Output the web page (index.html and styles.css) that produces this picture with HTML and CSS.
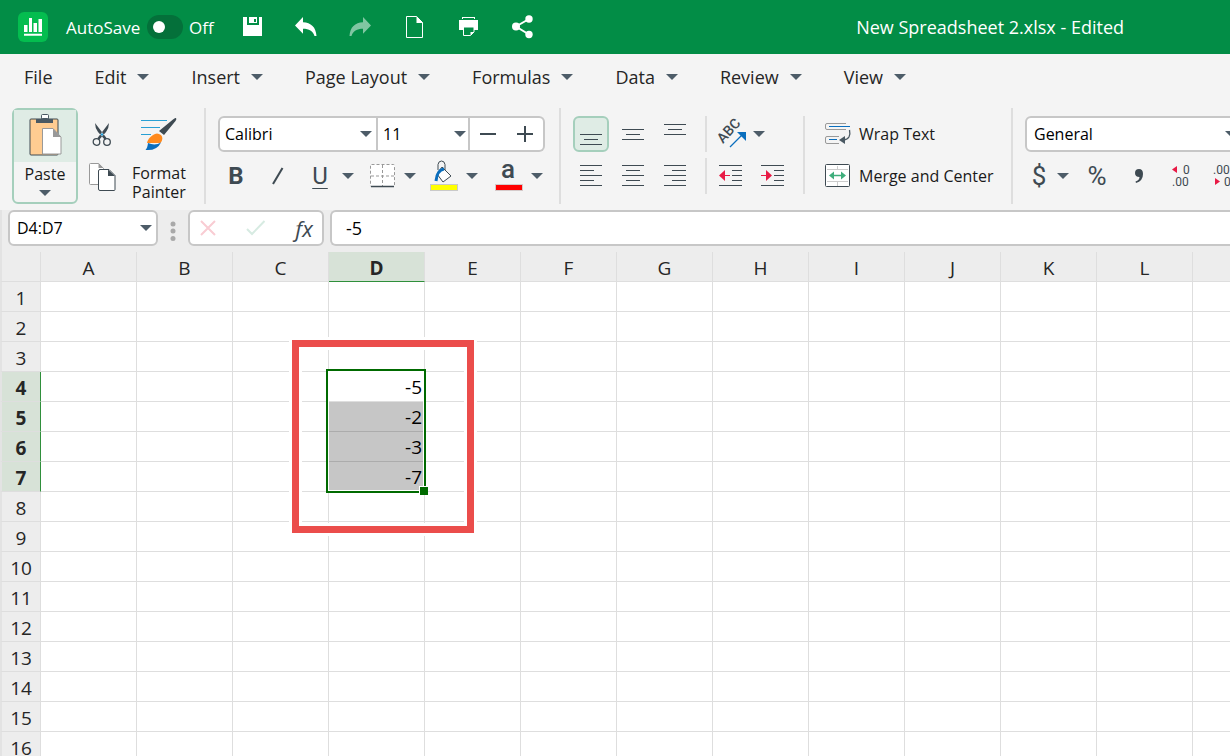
FILE: index.html
```html
<!DOCTYPE html>
<html lang="en">
<head>
<meta charset="utf-8">
<title>New Spreadsheet 2.xlsx</title>
<link rel="stylesheet" href="styles.css">
</head>
<body>
<header class="titlebar">
  <svg class="logo" viewBox="0 0 30 30"><rect width="30" height="30" rx="6" fill="#04bd4f"/><path d="M6 13h3.500v7H6zM11 6h3v14h-3zM15.500 11H19v9h-3.500zM20.500 7H24v13h-3.500zM6 21.800h18v2H6z" fill="#fff"/></svg>
  <label class="autosave"><span class="autosave-name">AutoSave</span><input type="checkbox" class="toggle"><span>Off</span></label>
  <nav class="quick">
    <button class="tool" aria-label="Save"><svg width="19" height="20"><path d="M0 0h4v8h12V0h3v19H0z" fill="#fff"/><path d="M6 0h8v6H6z" fill="#fff"/><path d="M11 2h2v3h-2z" fill="#028d46"/></svg></button>
    <button class="tool" aria-label="Undo"><svg width="22" height="20"><path d="M8 0v5.200C16 5.500 21 10 21.500 19h-2C18 14 14 11.700 8 11.700v5L0 8.500z" fill="#fff"/></svg></button>
    <button class="tool" aria-label="Redo"><svg width="22" height="20"><path d="M14 0v5.200C6 5.500 1 10 .5 19h2C4 14 8 11.700 14 11.700v5l8-8.200z" fill="#80c6a2"/></svg></button>
    <button class="tool" aria-label="New"><svg width="17" height="22"><path d="M.5.5h10l6 6v15H.5z" fill="none" stroke="#fff"/><path d="M10.500 0v7H17z" fill="#fff"/></svg></button>
    <button class="tool" aria-label="Print"><svg width="19" height="20"><path d="M3 0h13v2H3zM0 3h19v10h-4v-2.500H4.500V13H0z" fill="#fff"/><path d="M4 1h11v1H4z" fill="#028d46"/><path d="M4.500 10v8.500h7l3.500-3.500v-5z" fill="#028d46" stroke="#fff"/><path d="M11.500 18.500V15H15z" fill="#fff"/></svg></button>
    <button class="tool" aria-label="Share"><svg width="20" height="24"><path d="M17 4L4 11.500 17 19.500" fill="none" stroke="#fff" stroke-width="2"/><g fill="#fff"><circle cx="17" cy="4" r="3.700"/><circle cx="4" cy="11.500" r="4"/><circle cx="17" cy="19.500" r="3.700"/></g></svg></button>
  </nav>
  <h1 class="doc-title">New Spreadsheet 2.xlsx - Edited</h1>
</header>

<nav class="menubar">
  <button class="menu">File</button>
  <button class="menu">Edit<i class="caret"></i></button>
  <button class="menu">Insert<i class="caret"></i></button>
  <button class="menu">Page Layout<i class="caret"></i></button>
  <button class="menu">Formulas<i class="caret"></i></button>
  <button class="menu">Data<i class="caret"></i></button>
  <button class="menu">Review<i class="caret"></i></button>
  <button class="menu">View<i class="caret"></i></button>
</nav>

<section class="ribbon">
  <div class="group clipboard">
    <button class="paste">
      <span class="paste-icon"><svg width="34" height="44" viewBox="0 0 34 44"><rect x="2" y="6" width="28" height="36" rx="1" fill="#ffcc91" stroke="#3e4a52"/><path d="M8 10V6h5V3.500Q13 2 15 2h4q2 0 2 1.500V6h4v4z" fill="#4a5963"/><rect x="13.500" y="1.500" width="7" height="4" rx="1" fill="#fff" stroke="#4a5963"/><path d="M14.500 15.500h10.500l8 8.500v17H14.500z" fill="#fff" stroke="#999"/><path d="M25 15.500V24h8z" fill="#999"/></svg></span>
      <span class="paste-label">Paste</span><i class="caret"></i>
    </button>
    <div class="stack">
      <button class="tool" aria-label="Cut"><svg width="20" height="24" viewBox="0 0 20 24"><path d="M3 0q0 5 3 9l7 8 1.500-2z M17 0q0 5-3 9l-7 8-1.500-2z" fill="#3e4a52"/><circle cx="10" cy="11.500" r="1.200" fill="#1e9ad6"/><circle cx="4.500" cy="19" r="3.300" fill="none" stroke="#3e4a52" stroke-width="1.300"/><circle cx="15" cy="19" r="3.300" fill="none" stroke="#3e4a52" stroke-width="1.300"/></svg></button>
      <button class="tool" aria-label="Copy"><svg width="27" height="28" viewBox="0 0 27 28"><path d="M1.500.5h8l5 5v16h-13q-1 0-1-1v-19q0-1 1-1z" fill="#fff" stroke="#999"/><path d="M9.500 0v5h5z" fill="#999"/><path d="M11 6.500h9l6 6v14q0 1-1 1H11q-1.500 0-1.500-1.500V8q0-1.500 1.500-1.500z" fill="#fff" stroke="#3e4a52"/><path d="M19 6.500V13h7z" fill="#3e4a52"/></svg></button>
    </div>
    <button class="painter"><svg width="36" height="34" viewBox="0 0 36 34"><path d="M0 2.500h26M0 9.500h19M0 16.500h10" stroke="#28a0d4"/><path d="M35 0q1 1-.5 3L23 17l-5-4L32 1.500Q34-.5 35 0z" fill="#3e4a52"/><path d="M12 17q4-3 8 0 3 3.500-.5 8H6q1-5 6-8z" fill="#ff8a1e"/><path d="M7 25q7 3 13-.5-4 8.500-15.500 7.500Q6.500 30 7 25z" fill="#0a6ebd"/></svg><span>Format</span><span>Painter</span></button>
  </div>

  <div class="group font">
    <div class="row combo">
      <span class="select font-name"><select aria-label="Font"><option>Calibri</option></select><i class="caret"></i></span>
      <span class="select font-size"><select aria-label="Font size"><option>11</option></select><i class="caret"></i></span>
      <span class="steps"><button class="step" aria-label="Smaller"><svg width="16" height="16"><path d="M0 8h16" stroke="#3e4a52" stroke-width="2"/></svg></button><button class="step" aria-label="Larger"><svg width="16" height="16"><path d="M0 8h16M8 0v16" stroke="#3e4a52" stroke-width="2"/></svg></button></span>
    </div>
    <div class="row">
      <button class="tool glyph bold">B</button>
      <button class="tool" aria-label="Italic"><svg width="12" height="18"><path d="M1 17L10.500 1" stroke="#3e4a52" stroke-width="2"/></svg></button>
      <button class="tool split"><span class="glyph underline">U</span><i class="caret"></i></button>
      <button class="tool split" aria-label="Borders"><span><svg width="24" height="24"><rect x=".5" y=".5" width="24" height="22" rx="1" fill="#fff" stroke="#999" stroke-dasharray="3 2"/><path d="M12.500 1v22M1 12h24" stroke="#999" stroke-dasharray="3 2"/><path d="M1 22.500h23" stroke="#3e4a52" stroke-width="1.500"/></svg></span><i class="caret"></i></button>
      <button class="tool split wide" aria-label="Fill color"><span><svg width="28" height="32" viewBox="0 0 28 32"><path d="M8 10V4.500Q8.500 1 11.500 1T15 4.500V11" fill="none" stroke="#3e4a52"/><path d="M12 7l9 9-8 6-6-8z" fill="#fff" stroke="#3e4a52"/><path d="M14 9Q7 10 6 21" fill="none" stroke="#0a6ebd" stroke-width="3"/><rect x=".5" y="24.500" width="27" height="6" fill="#ff0" stroke="#c9c9c9"/></svg></span><i class="caret"></i></button>
      <button class="tool split" aria-label="Font color"><span><svg width="28" height="32" viewBox="0 0 28 32"><text x="13" y="18" class="svg-a">a</text><rect x=".5" y="24.500" width="27" height="6" fill="#f00" stroke="#d5caca"/></svg></span><i class="caret"></i></button>
    </div>
  </div>

  <div class="group align">
    <div class="row">
      <button class="tool active" aria-label="Bottom align"><svg width="22" height="26" viewBox="0 -8 22 26"><path d="M0 5.500h22M4 10.500h14M0 15.500h22" stroke="#3e4a52"/></svg></button>
      <button class="tool" aria-label="Middle align"><svg width="22" height="12"><path d="M0 1.500h22M4 6.500h14M0 11.500h22" stroke="#3e4a52"/></svg></button>
      <button class="tool" aria-label="Top align"><svg width="22" height="20"><path d="M0 .5h22M4 5.500h14M0 10.500h22" stroke="#3e4a52"/></svg></button>
    </div>
    <div class="row">
      <button class="tool" aria-label="Align left"><svg width="22" height="22"><path d="M0 .5h22M0 5.500h14M0 10.500h22M0 15.500h14M0 20.500h22" stroke="#3e4a52"/></svg></button>
      <button class="tool" aria-label="Align center"><svg width="22" height="22"><path d="M0 .5h22M4 5.500h14M0 10.500h22M4 15.500h14M0 20.500h22" stroke="#3e4a52"/></svg></button>
      <button class="tool" aria-label="Align right"><svg width="22" height="22"><path d="M0 .5h22M8 5.500h14M0 10.500h22M8 15.500h14M0 20.500h22" stroke="#3e4a52"/></svg></button>
    </div>
  </div>

  <div class="subgroup indent">
    <div class="row short-line">
      <button class="tool split" aria-label="Orientation"><span><svg width="32" height="32" viewBox="0 0 32 32"><text class="svg-abc" transform="translate(8 26) rotate(-48)">ABC</text><path d="M15 29L28 16" stroke="#0a6ebd" stroke-width="1.300"/><path d="M22 14h9v9z" fill="#0a6ebd"/></svg></span><i class="caret"></i></button>
    </div>
    <div class="row short-line">
      <button class="tool" aria-label="Decrease indent"><svg width="24" height="22"><path d="M0 .5h23M13 5.500h10M13 10.500h10M13 15.500h10M0 20.500h23" stroke="#3e4a52"/><path d="M5 10.500h6" stroke="#e81a45"/><path d="M6 5v11l-6-5.500z" fill="#e81a45"/></svg></button>
      <button class="tool" aria-label="Increase indent"><svg width="24" height="22"><path d="M0 .5h23M13 5.500h10M13 10.500h10M13 15.500h10M0 20.500h23" stroke="#3e4a52"/><path d="M0 10.500h6" stroke="#e81a45"/><path d="M5 5v11l6-5.500z" fill="#e81a45"/></svg></button>
    </div>
  </div>

  <div class="subgroup wrap">
    <button class="labelled"><svg width="26" height="24"><path d="M21 1.500H2Q.5 1.500.5 3v3Q.5 7.500 2 7.500h19M14 14.500H2q-1.500 0-1.500 1.500v4q0 1.500 1.500 1.500h12" fill="none" stroke="#999"/><path d="M4 4.500h21M4 17.500h8" stroke="#0a6ebd"/><path d="M24.500 8q2 9-6 10" fill="none" stroke="#4a5963" stroke-width="1.300"/><path d="M20 14v8l-6-4z" fill="#4a5963"/></svg>Wrap Text</button>
    <button class="labelled"><svg width="26" height="24"><rect x=".5" y=".5" width="24" height="22" rx="1" fill="#fff" stroke="#3e4a52"/><path d="M2 5.500h21M2 17.500h21M12.500 2v4M12.500 18v4" stroke="#ccc"/><path d="M7 11.500h11" stroke="#3fae7c" stroke-width="1.500"/><path d="M9 7.500v8l-5-4zM16 7.500v8l5-4z" fill="#3fae7c"/></svg>Merge and Center</button>
  </div>

  <div class="group number">
    <div class="row combo"><span class="select format"><select aria-label="Number format"><option>General</option></select><i class="caret"></i></span></div>
    <div class="row">
      <button class="tool split dollar"><span class="glyph light">$</span><i class="caret"></i></button>
      <button class="tool glyph light">%</button>
      <button class="tool" aria-label="Comma style"><svg width="10" height="14"><path d="M5 0q4 0 4 5 0 7-7 9l-.5-1.500q4-1.500 4-4.500Q1 8 1 4t4-4z" fill="#3e4a52"/></svg></button>
      <button class="tool" aria-label="Fewer decimals"><svg width="22" height="24"><path d="M7 2v7L2 5.500z" fill="#e81a45"/><text x="13" y="10" class="svg-dec">0</text><text x="2" y="22" class="svg-dec">.00</text></svg></button>
      <button class="tool" aria-label="More decimals"><svg width="22" height="24"><text x="1" y="10" class="svg-dec">.00</text><path d="M3 14v7l5-3.500z" fill="#e81a45"/><text x="12" y="22" class="svg-dec">0</text></svg></button>
    </div>
  </div>
</section>

<main class="workbook">
  <div class="formula-bar">
    <span class="select name-box"><select aria-label="Name box"><option>D4:D7</option></select><i class="caret"></i></span>
    <svg class="grip" width="6" height="22"><g fill="#a9a9a9"><circle cx="3" cy="4" r="2.500"/><circle cx="3" cy="11" r="2.500"/><circle cx="3" cy="18.500" r="2.500"/></g></svg>
    <div class="entry">
      <button class="tool" aria-label="Cancel"><svg width="16" height="16"><path d="M1 1l14 14M15 1L1 15" stroke="#f9ccd3" stroke-width="2"/></svg></button>
      <button class="tool" aria-label="Enter"><svg width="20" height="16"><path d="M1 9l5 5L18.500 1" fill="none" stroke="#d7ebe2" stroke-width="2"/></svg></button>
      <button class="tool fx">fx</button>
    </div>
    <input class="formula" aria-label="Formula" value="-5">
  </div>
  <div class="sheet">
    <table class="grid">
      <thead><tr><th class="corner"></th><th>A</th><th>B</th><th>C</th><th class="on">D</th><th>E</th><th>F</th><th>G</th><th>H</th><th>I</th><th>J</th><th>K</th><th>L</th><th class="rest"></th></tr></thead>
      <tbody id="rows"></tbody>
    </table>
    <div class="selection"></div>
    <div class="highlight"></div>
  </div>
</main>
<script src="sheet.js"></script>
</body>
</html>
```
FILE: styles.css
```css
* { box-sizing: border-box; }
body {
  margin: 0;
  height: 100vh;
  display: flex;
  flex-direction: column;
  overflow: hidden;
  background: #f4f4f4;
  color: #262626;
  font-family: "Open Sans", "Noto Sans", sans-serif;
  font-size: 18px;
  white-space: nowrap;
}
button, select, input { font: inherit; color: inherit; margin: 0; padding: 0; border: 0; background: none; }
svg { display: block; flex: none; overflow: visible; }

.caret {
  flex: none;
  width: 12px;
  border: 6px solid transparent;
  border-top-color: #4d5c68;
  border-bottom: 0;
}

.titlebar { display: flex; align-items: center; height: 54px; flex: none; padding-left: 18px; background: #028d46; color: #fff; }
.logo { width: 30px; height: 30px; margin-right: 18px; }
.autosave { display: flex; align-items: center; gap: 6px; width: 168px; font-size: 17px; }
.autosave-name { width: 75px; }
.toggle { appearance: none; display: flex; align-items: center; width: 36px; height: 24px; padding-left: 6px; border-radius: 12px; background: #04703a; }
.toggle::before { content: ""; width: 12px; height: 12px; border-radius: 6px; background: #fff; }
.quick { display: flex; gap: 18px; }
.doc-title { margin: 0 106px 0 auto; font-size: 18px; font-weight: 400; }

.tool { display: flex; align-items: center; justify-content: center; flex: none; width: 36px; height: 36px; }

.menubar { display: flex; gap: 42px; flex: none; height: 46px; padding-left: 24px; }
.menu { display: flex; align-items: center; gap: 11px; }

.ribbon { display: flex; flex: none; height: 110px; padding: 8px 0 6px; color: #1a1a1a; font-size: 16px; }
.group { display: flex; flex-direction: column; justify-content: center; gap: 6px; flex: none; padding: 0 14px 2px 12px; border-left: 2px solid #dedede; }
.row { display: flex; align-items: center; gap: 6px; height: 36px; }
.clipboard { flex-direction: row; justify-content: flex-start; gap: 6px; width: 204px; padding: 0 0 0 12px; border: 0; }
.paste { display: flex; flex-direction: column; align-items: center; width: 66px; border: 2px solid #a5cfbc; border-radius: 6px; line-height: 24px; }
.paste-icon { display: flex; justify-content: center; width: 100%; height: 52px; padding-top: 3px; background: #dfece5; }
.paste-label { margin-bottom: 4px; }
.stack { display: flex; flex-direction: column; justify-content: center; gap: 6px; }
.painter { display: flex; flex-direction: column; align-items: center; padding: 10px 0 0 6px; line-height: 19px; }
.painter svg { margin-bottom: 12px; }

.combo { gap: 0; }
.font { padding-right: 12px; }
.select { position: relative; display: flex; height: 36px; border: 2px solid #c7c7c7; background: #fff; color: #000; }
.select select { appearance: none; width: 100%; padding-left: 5px; }
.select .caret { position: absolute; right: 4px; top: 13px; pointer-events: none; }
.font-name { width: 160px; border-radius: 6px 0 0 6px; }
.font-size { width: 92px; border-left: 0; }
.font-size .caret { right: 2px; }
.steps { display: flex; width: 75px; height: 36px; border: 2px solid #c7c7c7; border-left: 0; border-radius: 0 6px 6px 0; background: #fff; }
.step { display: flex; flex: 1; align-items: center; justify-content: center; }

.split { width: 56px; }
.split > span { display: flex; justify-content: center; width: 36px; }
.split .caret { margin: 0 4px; }
.wide { width: 59px; justify-content: flex-start; }
.glyph { color: #3e4a52; font-family: Roboto, sans-serif; font-size: 24px; }
.bold { font-weight: 700; }
.underline { text-decoration: underline; text-decoration-thickness: 1px; text-underline-offset: 4px; }
.light { font-size: 26px; font-weight: 400; }
.svg-a { font: 500 26px Roboto, sans-serif; fill: #3e4a52; text-anchor: middle; }
.svg-abc { font: 500 14px Roboto, sans-serif; fill: #3e4a52; }
.svg-dec { font: 12px Roboto, sans-serif; fill: #3e4a52; }
.active { border: 2px solid #a5cfbc; border-radius: 6px; background: #dfece5; }
.align { padding-right: 12px; }
.subgroup { display: flex; flex-direction: column; justify-content: center; gap: 6px; flex: none; padding-bottom: 2px; }
.indent { width: 98px; }
.short-line { padding-left: 6px; border-left: 2px solid #dedede; }
.wrap { gap: 0; width: 208px; height: 78px; margin: 8px 0 0; padding: 0 0 0 20px; border-left: 2px solid #dedede; }
.labelled { display: flex; flex: none; align-items: center; gap: 8px; height: 42px; text-align: left; }
.number { flex: 1; padding-right: 0; }
.format { flex: none; width: 218px; border-radius: 6px; }
.format select { padding-left: 7px; }
.dollar { width: 48px; }
.dollar > span { width: 28px; }

.workbook { display: flex; flex-direction: column; flex: 1; min-height: 0; background: #ededed; }
.formula-bar { display: flex; align-items: flex-start; flex: none; height: 42px; padding-left: 6px; border-left: 2px solid #e3e3e3; font-size: 16px; }
.name-box { width: 150px; border-radius: 6px; }
.name-box select { padding-left: 7px; }
.grip { margin: 10px 12px 0; }
.entry { display: flex; justify-content: space-between; align-items: center; width: 136px; height: 36px; border: 2px solid #c7c7c7; border-radius: 6px; background: #fff; }
.fx { font-size: 22px; font-style: italic; font-weight: 500; color: #3e4a52; }
.formula { flex: 1; min-width: 0; height: 36px; margin-left: 6px; padding-left: 14px; border: 2px solid #c7c7c7; border-right: 0; border-radius: 6px 0 0 6px; background: #fff; color: #000; font-size: 18px; }

.sheet { position: relative; flex: 1; min-height: 0; overflow: hidden; font-size: 19px; }
.grid { width: 100%; table-layout: fixed; border-collapse: separate; border-spacing: 0; }
.grid th, .grid td { height: 30px; padding: 3px 0 0; border: solid #dedede; border-width: 0 1px 1px 0; line-height: 24px; }
.grid th { width: 96px; background: #ededed; font-weight: 400; }
.grid td { padding: 0 2px 0 0; background: #fff; text-align: right; color: #000; }
.grid tr > :last-child { border-right: 0; }
.grid .corner { width: 41px; }
.grid .rest { width: auto; }
.grid th:first-child { border-left: 2px solid #e3e3e3; }
.grid .on { background: #d7e2d7; font-weight: 700; }
.grid thead .on { border-bottom-color: #2f8f3b; }
.grid tbody .on { border-right-color: #2f8f3b; }
.grid .picked { background: #c6c6c6; border-bottom-color: #acacac; }

/* Overlays that float above the cells */
.selection { position: absolute; left: 326px; top: 117px; width: 100px; height: 124px; border: 2px solid #006a00; box-shadow: inset 0 0 0 1px #fff; }
.selection::after { content: ""; position: absolute; right: -4px; bottom: -4px; width: 8px; height: 8px; border: solid #fff; border-width: 1px 0 0 1px; background: #006a00; }
.highlight { position: absolute; left: 292px; top: 88px; width: 182px; height: 193px; border: 7px solid #eb4d4b; box-shadow: 0 0 0 3px #fff, inset 0 0 0 3px #fff; }
```
FILE: sheet.js
```js
const values = { 4: "-5", 5: "-2", 6: "-3", 7: "-7" };
const body = document.getElementById("rows");
for (let r = 1; r <= 16; r++) {
  const row = body.insertRow();
  const head = document.createElement("th");
  head.textContent = r;
  if (values[r]) head.className = "on";
  row.append(head);
  for (let c = 1; c <= 13; c++) {
    const cell = row.insertCell();
    if (c === 4 && values[r]) {
      cell.textContent = values[r];
      if (r > 4) cell.className = "picked";
    }
  }
}
```
